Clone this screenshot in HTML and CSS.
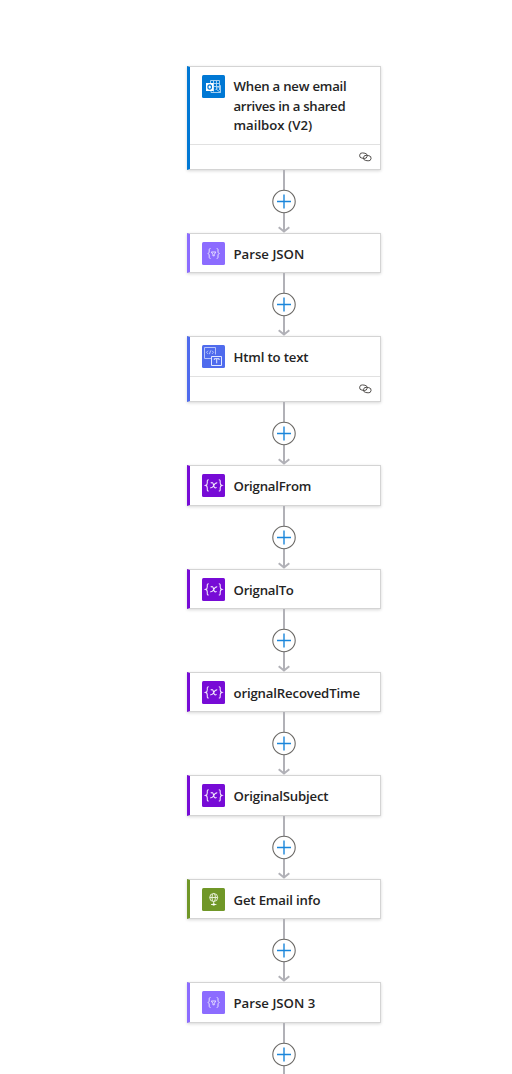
FILE: index.html
```html
<!DOCTYPE html>
<html lang="en">
<head>
<meta charset="utf-8">
<title>Flow designer</title>
<link rel="stylesheet" href="styles.css">
</head>
<body>
<svg class="defs" width="0" height="0">
  <symbol id="outlook" viewBox="0 0 23 23">
    <g fill="none" stroke="#b5d8f3" stroke-width=".9"><path d="M8.500 8V5.500h9V15M10 8.500h7.500M12 11.500h5.500M11.500 5.500v11M14.500 5.500v8M9 15v2.500h9.500v-7l-5 4M14 14l4.500 3.500"/></g>
    <path d="M4 8h7.500v8H4z" fill="#fff"/><ellipse cx="7.700" cy="12" rx="1.800" ry="2.100" fill="none" stroke="#0078d4" stroke-width="1.200"/>
  </symbol>
  <symbol id="json" viewBox="0 0 23 23">
    <g fill="none" stroke="#e4dcff" stroke-width="1"><path d="M8.500 6.500C7 6.500 7.200 7.500 7.200 9c0 1.500-.2 2.200-1.400 2.500 1.200.3 1.400 1 1.400 2.500s-.2 2.500 1.300 2.500M14.700 6.500c1.500 0 1.300 1 1.300 2.500 0 1.500.2 2.200 1.400 2.500-1.200.3-1.400 1-1.400 2.500s.2 2.500-1.300 2.500M9.300 10h4.600l-1.600 2.300v1.500h-1.400v-1.500z"/></g>
  </symbol>
  <symbol id="html" viewBox="0 0 23 23">
    <g fill="none" stroke="#b8c5fb" stroke-width="1"><path d="M9.500 13.500h-7v-11h11v7M6 5.700 4.500 7.300 6 8.900M10 5.700l1.500 1.600L10 8.900M8.700 5.500l-1.300 3.700"/><path d="M9.500 11.500h10v9h-10z" stroke="#e1e7ff"/><path d="M12.300 15v-1.300h4.800V15M14.700 13.700v4.600" stroke="#e1e7ff"/></g>
  </symbol>
  <symbol id="variable" viewBox="0 0 23 23">
    <g fill="none" stroke="#f1e6fc" stroke-width="1.100"><path d="M6.700 5.800c-1.800 0-1.400 1.200-1.400 2.900 0 1.600-.3 2.300-1.600 2.700 1.300.4 1.600 1.100 1.600 2.700 0 1.700-.4 2.900 1.400 2.900M16.800 5.800c1.800 0 1.400 1.200 1.400 2.900 0 1.600.3 2.300 1.600 2.700-1.300.4-1.600 1.100-1.600 2.700 0 1.700.4 2.900-1.400 2.900"/><path d="M8.700 9.100c1.800-1 2.400-.2 2.800 1.700.6 2.700 1.200 3.900 3.100 2.600M15.200 8.900c-2.100-.5-3 1.800-3.800 3.100-.9 1.500-1.700 2.100-3.200 1.700"/></g>
  </symbol>
  <symbol id="globe" viewBox="0 0 23 23">
    <g fill="none" stroke="#e6efd6" stroke-width="1"><circle cx="11.700" cy="9.500" r="4"/><ellipse cx="11.700" cy="9.500" rx="1.700" ry="4"/><path d="M7.700 9.500h8M11.700 13.500v2M9 16.500h5.400"/></g><circle cx="11.700" cy="16.400" r="1.200" fill="#fff"/>
  </symbol>
  <symbol id="link" viewBox="0 0 13 10">
    <g fill="none" stroke="#4a4745" stroke-width=".9"><rect x=".6" y="1.100" width="7.600" height="5.200" rx="2.600" transform="rotate(8 4.600 3.700)"/><rect x="4.500" y="3.500" width="7.600" height="5.200" rx="2.600" transform="rotate(8 8.500 6)"/></g>
  </symbol>
  <symbol id="edge" viewBox="0 0 26 63">
    <path d="M13 0v62M7.700 57.200l5.300 4.300 5.300-4.300" fill="none" stroke="#b1b1b7" stroke-width="2"/>
    <circle cx="13" cy="31.500" r="11.200" fill="#fff" stroke="#6b6966" stroke-width="1.100"/>
    <path d="M6 31.500h14M13 24.500v14" stroke="#1b86db" stroke-width="1.400"/>
  </symbol>
</svg>
<main class="flow">
  <section class="card trigger"><div class="head"><svg class="icon"><use href="#outlook"/></svg><h2><span class="tight">When a new email</span><br><span class="tighter">arrives in a shared</span><br><span>mailbox (V2)</span></h2></div><div class="foot"><svg class="link"><use href="#link"/></svg></div></section>
  <svg class="edge"><use href="#edge"/></svg>
  <section class="card json"><div class="head"><svg class="icon"><use href="#json"/></svg><h2>Parse JSON</h2></div></section>
  <svg class="edge"><use href="#edge"/></svg>
  <section class="card html"><div class="head"><svg class="icon"><use href="#html"/></svg><h2><span class="snug">Html to text</span></h2></div><div class="foot"><svg class="link"><use href="#link"/></svg></div></section>
  <svg class="edge"><use href="#edge"/></svg>
  <section class="card variable"><div class="head"><svg class="icon"><use href="#variable"/></svg><h2><span class="tight">OrignalFrom</span></h2></div></section>
  <svg class="edge"><use href="#edge"/></svg>
  <section class="card variable"><div class="head"><svg class="icon"><use href="#variable"/></svg><h2><span class="tight">OrignalTo</span></h2></div></section>
  <svg class="edge"><use href="#edge"/></svg>
  <section class="card variable"><div class="head"><svg class="icon"><use href="#variable"/></svg><h2><span class="snug">orignalRecovedTime</span></h2></div></section>
  <svg class="edge"><use href="#edge"/></svg>
  <section class="card variable"><div class="head"><svg class="icon"><use href="#variable"/></svg><h2><span class="snug">OriginalSubject</span></h2></div></section>
  <svg class="edge"><use href="#edge"/></svg>
  <section class="card http"><div class="head"><svg class="icon"><use href="#globe"/></svg><h2><span class="snug">Get Email info</span></h2></div></section>
  <svg class="edge"><use href="#edge"/></svg>
  <section class="card json"><div class="head"><svg class="icon"><use href="#json"/></svg><h2>Parse JSON 3</h2></div></section>
  <svg class="edge"><use href="#edge"/></svg>
</main>
</body>
</html>
```

FILE: styles.css
```css
* { box-sizing: border-box; }
body { margin: 0; background: #fff; height: 1074px; overflow: hidden; }
.defs { display: block; }
.flow { display: flex; flex-direction: column; align-items: center; padding: 65.600px 0 0 56px; }
.card {
  --accent: #770bd6;
  flex: none;
  width: 194px;
  height: 40.400px;
  background: #fff;
  border: 1px solid #d4d4d4;
  border-left: 3px solid var(--accent);
  box-shadow: 0 1px 3px rgba(0, 0, 0, .16);
}
.trigger { --accent: #0078d4; height: 104.400px; }
.html { --accent: #4f6bed; height: 65.950px; }
.json { --accent: #8c6cff; }
.http { --accent: #709727; }
.head { display: flex; align-items: flex-start; gap: 8.500px; height: 38.600px; padding: 7.950px 0 0 12px; }
.trigger .head { height: 77.500px; }
.icon { flex: none; width: 23px; height: 23px; border-radius: 1.500px; background: var(--accent); }
h2 { margin: 2.900px 0 0; font: 600 13.200px/19.500px "Open Sans", "Noto Sans", sans-serif; color: #242424; white-space: nowrap; }
.snug { letter-spacing: -.16px; }
.tight { letter-spacing: -.23px; }
.tighter { letter-spacing: -.31px; }
.foot { display: flex; align-items: center; justify-content: flex-end; height: 25.200px; padding-right: 8px; border-top: 1px solid #e1e1e1; }
.link { width: 13px; height: 10px; }
.edge { flex: none; display: block; width: 26px; height: 63px; }
```
